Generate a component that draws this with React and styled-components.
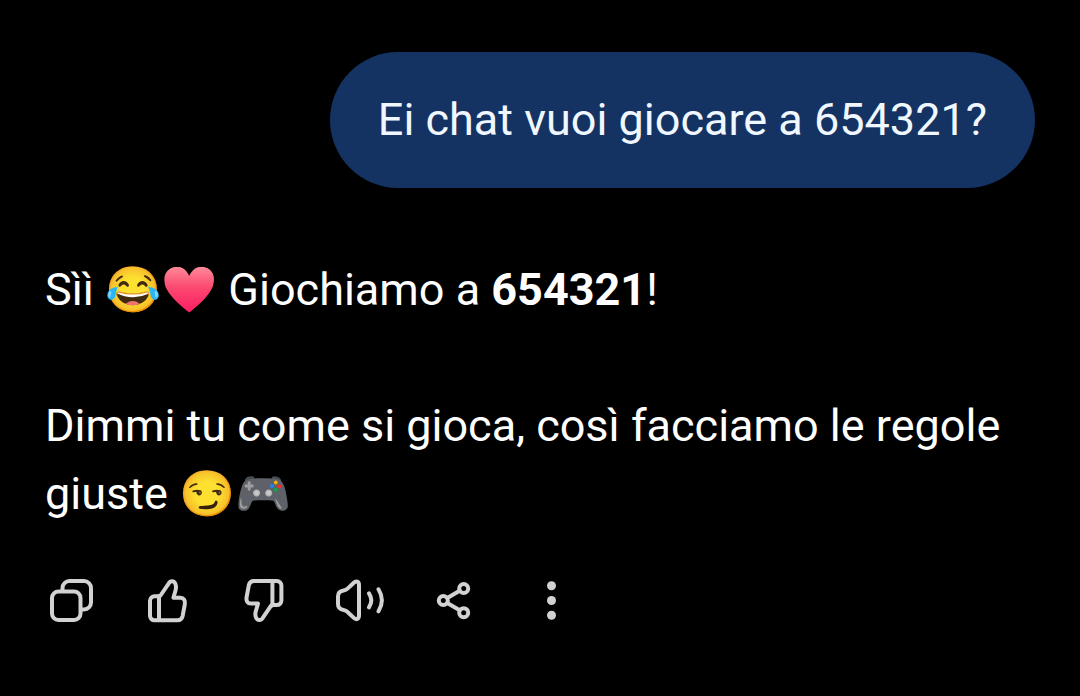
import styled, { createGlobalStyle } from "styled-components";

export default function App() {
  return (
    <>
      <GlobalStyle />
      <Page>
        <UserBubble>Ei chat vuoi giocare a 654321?</UserBubble>

        <Reply>
          <p>
            Sìì 😂<Heart>❤️</Heart> Giochiamo a <strong>654321</strong>!
          </p>
          <p>Dimmi tu come si gioca, così facciamo le regole giuste 😏🎮</p>
        </Reply>

        <Actions>
          <ActionButton type="button" aria-label="Copia">
            <CopyIcon />
          </ActionButton>
          <ActionButton type="button" aria-label="Mi piace">
            <ThumbIcon />
          </ActionButton>
          <ActionButton type="button" aria-label="Non mi piace">
            <ThumbIcon down />
          </ActionButton>
          <ActionButton type="button" aria-label="Leggi ad alta voce">
            <SpeakerIcon />
          </ActionButton>
          <ActionButton type="button" aria-label="Condividi">
            <ShareIcon />
          </ActionButton>
          <ActionButton type="button" aria-label="Altro">
            <MoreIcon />
          </ActionButton>
        </Actions>
      </Page>
    </>
  );
}

function CopyIcon() {
  return (
    <Icon viewBox="0 0 48 48">
      <rect x="4" y="14.5" width="28.5" height="28.5" rx="6.5" />
      <path d="M14.5 14V11a7 7 0 0 1 7-7H36a7 7 0 0 1 7 7V25.5a7 7 0 0 1-7 7h-3" />
    </Icon>
  );
}

function ThumbIcon({ down }) {
  return (
    <Icon viewBox="0 0 48 48">
      <g transform={down ? "rotate(180 23.7 23.7)" : undefined}>
        <path d="M15 19.3h-4.5A4.5 4.5 0 0 0 6 23.800v15a4.500 4.500 0 0 0 4.500 4.500H33.500c2.700 0 4.500-1.500 5.100-4.200l2.200-11.800c.7-4-1-6.500-4.400-6.500h-7l2.200-7.600c1.300-4.600-.5-8.900-3.500-8.900-1.500 0-2.600.7-3.300 2L16.500 18.500" />
        <path d="M15 19v24" />
      </g>
    </Icon>
  );
}

function SpeakerIcon() {
  return (
    <Icon viewBox="0 0 48 48">
      <path d="M23 8c0-3.500-2.800-4.600-5.200-2.300l-6 5.700c-1.300 1.300-2.300 1.800-4.200 2.100C4 14 2 16 2 19.500v7.600c0 3.500 2 5.500 5.600 6 1.900.3 2.900.8 4.200 2.100l6 5.700c2.400 2.300 5.200 1.200 5.200-2.300z" />
      <path d="M33 16.300c3 4.500 3 9.500 0 14M42.500 12.300c4.300 7 4.300 15 0 22" />
    </Icon>
  );
}

function ShareIcon() {
  return (
    <Icon viewBox="0 0 48 48">
      <circle cx="11.3" cy="23.5" r="4.5" />
      <circle cx="31.7" cy="11.5" r="4.5" />
      <circle cx="31.7" cy="35.7" r="4.5" />
      <path d="M15.3 21l12.4-7.3M15.3 26l12.4 7.3" />
    </Icon>
  );
}

function MoreIcon() {
  return (
    <Icon viewBox="0 0 48 48" $filled>
      <circle cx="23.5" cy="8.7" r="4.5" />
      <circle cx="23.5" cy="23.5" r="4.5" />
      <circle cx="23.5" cy="38.3" r="4.5" />
    </Icon>
  );
}

const GlobalStyle = createGlobalStyle`
  body {
    margin: 0;
    background: #000;
  }
`;

const Page = styled.main`
  min-height: 100vh;
  box-sizing: border-box;
  padding: 52px 45px;
  display: flex;
  flex-direction: column;
  background: #000;
  color: #fff;
  font-family: Roboto, sans-serif;
  font-size: 45px;
  line-height: 68px;
`;

const UserBubble = styled.div`
  align-self: flex-end;
  padding: 34px 48px;
  border-radius: 68px;
  background: #143362;
  color: #f0f7ff;
`;

const Reply = styled.div`
  margin-top: 68px;
  display: flex;
  flex-direction: column;
  gap: 68px;

  & p {
    margin: 0;
  }

  & strong {
    font-weight: 700;
  }
`;

const Heart = styled.span`
  color: transparent;
  background: linear-gradient(#ff8596 10%, #fb4a70 45%, #fb1f63 90%);
  background-clip: text;
  -webkit-background-clip: text;
`;

const Actions = styled.div`
  margin: 49px 0 0 3px;
  display: flex;
  gap: 48px;
`;

const ActionButton = styled.button`
  width: 48px;
  height: 48px;
  padding: 0;
  border: 0;
  background: none;
  color: #d2d2d2;
  cursor: pointer;
`;

const Icon = styled.svg`
  display: block;
  width: 48px;
  height: 48px;
  fill: ${({ $filled }) => ($filled ? "currentColor" : "none")};
  stroke: ${({ $filled }) => ($filled ? "none" : "currentColor")};
  stroke-width: 4;
  stroke-linecap: round;
  stroke-linejoin: round;
`;
